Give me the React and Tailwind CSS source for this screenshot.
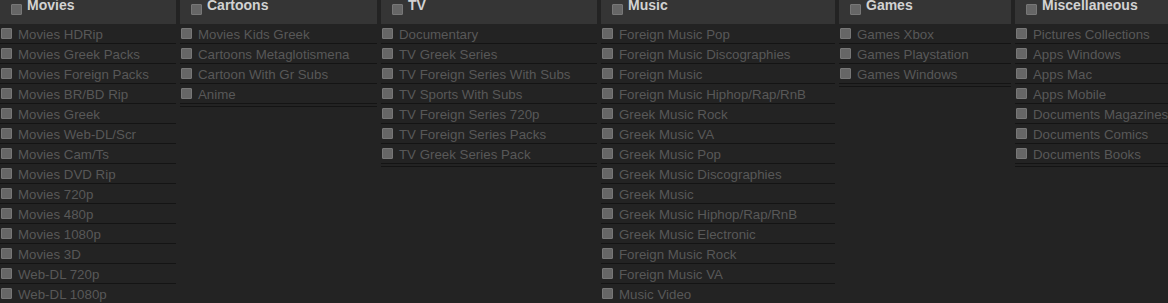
const columns = [
    {
        title: "Movies",
        width: "w-[176px]",
        items: ["Movies HDRip", "Movies Greek Packs", "Movies Foreign Packs", "Movies BR/BD Rip", "Movies Greek", "Movies Web-DL/Scr", "Movies Cam/Ts", "Movies DVD Rip", "Movies 720p", "Movies 480p", "Movies 1080p", "Movies 3D", "Web-DL 720p", "Web-DL 1080p", "Movies 4K"],
    },
    {
        title: "Cartoons",
        width: "w-[197px]",
        items: ["Movies Kids Greek", "Cartoons Metaglotismena", "Cartoon With Gr Subs", "Anime"],
    },
    {
        title: "TV",
        width: "w-[216px]",
        items: ["Documentary", "TV Greek Series", "TV Foreign Series With Subs", "TV Sports With Subs", "TV Foreign Series 720p", "TV Foreign Series Packs", "TV Greek Series Pack"],
    },
    {
        title: "Music",
        width: "w-[234px]",
        items: ["Foreign Music Pop", "Foreign Music Discographies", "Foreign Music", "Foreign Music Hiphop/Rap/RnB", "Greek Music Rock", "Greek Music VA", "Greek Music Pop", "Greek Music Discographies", "Greek Music", "Greek Music Hiphop/Rap/RnB", "Greek Music Electronic", "Foreign Music Rock", "Foreign Music VA", "Music Video"],
    },
    {
        title: "Games",
        width: "w-[172px]",
        items: ["Games Xbox", "Games Playstation", "Games Windows"],
    },
    {
        title: "Miscellaneous",
        width: "w-[160px]",
        items: ["Pictures Collections", "Apps Windows", "Apps Mac", "Apps Mobile", "Documents Magazines", "Documents Comics", "Documents Books"],
    },
];

const Box = ({ className = "" }) => (
    <span className={`block w-[11px] h-[11px] shrink-0 bg-[#666] border border-[#777] rounded-[1px] ${className}`} />
);

const App = () => {
    return (
        <div className="min-h-screen h-[303px] overflow-hidden bg-[#232323] font-['Liberation_Sans',Arial,sans-serif]">
            <div className="flex gap-[4px] items-start">
                {columns.map((col) => (
                    <div key={col.title} className={`${col.width} shrink-0`}>
                        <div className="h-[24px] bg-[#353535] flex items-start overflow-hidden">
                            <Box className="mt-[4px] ml-[11px]" />
                            <span className="ml-[5px] -mt-[3px] text-[14px] leading-[16px] font-bold text-[#d2d2d2] whitespace-nowrap">
                                {col.title}
                            </span>
                        </div>
                        {col.items.map((item) => (
                            <div key={item} className="h-[20px] border-b border-[#141414] flex items-center">
                                <Box className="ml-[1px]" />
                                <span className="ml-[6px] mt-[2px] text-[13.3px] leading-[19px] text-[#585858] whitespace-nowrap">
                                    {item}
                                </span>
                            </div>
                        ))}
                        <div className="mt-[2px] h-px bg-[#141414]" />
                    </div>
                ))}
            </div>
        </div>
    );
};

export default App;
